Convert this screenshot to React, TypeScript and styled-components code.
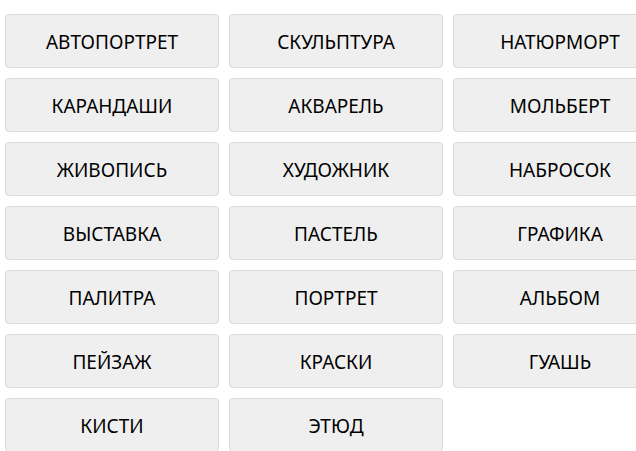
import React from "react";
import styled, { createGlobalStyle } from "styled-components";

const Global = createGlobalStyle`
  html, body { margin: 0; padding: 0; background: #ffffff; overflow: hidden; }
  body { font-family: "Noto Sans", "Open Sans", sans-serif; }
`;

const Grid = styled.div`
  display: grid;
  grid-template-columns: repeat(3, 214px);
  grid-auto-rows: 54px;
  column-gap: 10px;
  row-gap: 10px;
  padding: 14px 0 0 5px;
  width: 700px;
`;

const WordButton = styled.button`
  box-sizing: border-box;
  width: 214px;
  height: 54px;
  margin: 0;
  padding: 2px 0 0;
  background: #efefef;
  border: 1px solid #dadada;
  border-radius: 4px;
  color: #000000;
  font-family: "Noto Sans", "Open Sans", sans-serif;
  font-size: 19px;
  display: flex;
  align-items: center;
  justify-content: center;
  cursor: pointer;
`;

const words = [
  "АВТОПОРТРЕТ", "СКУЛЬПТУРА", "НАТЮРМОРТ",
  "КАРАНДАШИ", "АКВАРЕЛЬ", "МОЛЬБЕРТ",
  "ЖИВОПИСЬ", "ХУДОЖНИК", "НАБРОСОК",
  "ВЫСТАВКА", "ПАСТЕЛЬ", "ГРАФИКА",
  "ПАЛИТРА", "ПОРТРЕТ", "АЛЬБОМ",
  "ПЕЙЗАЖ", "КРАСКИ", "ГУАШЬ",
  "КИСТИ", "ЭТЮД",
];

export default function App() {
  return (
    <>
      <Global />
      <Grid>
        {words.map((w) => (
          <WordButton key={w}>{w}</WordButton>
        ))}
      </Grid>
    </>
  );
}
